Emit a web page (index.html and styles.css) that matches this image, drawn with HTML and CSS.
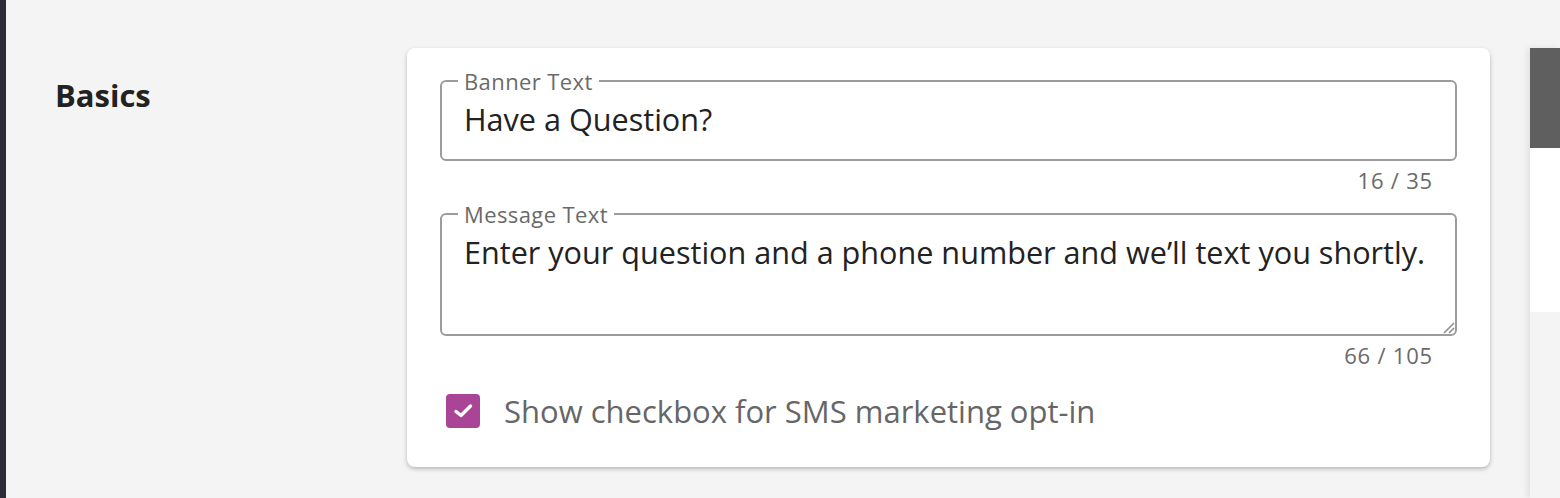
FILE: index.html
```html
<!DOCTYPE html>
<html lang="en">
<head>
    <meta charset="UTF-8">
    <meta name="viewport" content="width=device-width, initial-scale=1.0">
    <title>Basics</title>
    <link rel="stylesheet" href="styles.css">
</head>
<body>
    <div class="app">
        <div class="sidebar"></div>

        <main class="content">
            <section class="settings-row">
                <h2 class="settings-title">Basics</h2>

                <div class="card">
                    <fieldset class="field">
                        <legend>Banner Text</legend>
                        <input class="field-input" type="text" value="Have a Question?">
                    </fieldset>
                    <div class="counter">16 / 35</div>

                    <fieldset class="field field-multiline">
                        <legend>Message Text</legend>
                        <textarea class="field-input field-textarea">Enter your question and a phone number and we’ll text you shortly.</textarea>
                        <svg class="resize-grip" width="14" height="14" viewBox="0 0 14 14">
                            <path d="M3 13 L13 3 M8 13 L13 8" stroke="#8a8a8a" stroke-width="1.5" fill="none"/>
                        </svg>
                    </fieldset>
                    <div class="counter">66 / 105</div>

                    <label class="check-row">
                        <span class="check-box">
                            <svg width="34" height="34" viewBox="0 0 34 34">
                                <path d="M10 17.5 L15 21.5 L24.5 12" stroke="#fff" stroke-width="3.4" fill="none" stroke-linecap="round" stroke-linejoin="round"/>
                            </svg>
                        </span>
                        <span class="check-label">Show checkbox for SMS marketing opt-in</span>
                    </label>
                </div>
            </section>

            <aside class="preview">
                <div class="preview-header"></div>
                <div class="preview-body"></div>
            </aside>
        </main>
    </div>
</body>
</html>
```

FILE: styles.css
```css
body {
    margin: 0;
    padding: 0;
    font-family: "Open Sans", "Noto Sans", sans-serif;
    overflow: hidden;
}

.app {
    display: flex;
    height: 498px;
    background-color: #f4f4f4;
}

.sidebar {
    width: 6px;
    flex-shrink: 0;
    background-color: #2c2b36;
}

.content {
    flex: 1;
    display: flex;
    padding-top: 48px;
    min-width: 0;
}

.settings-row {
    display: flex;
    padding-left: 49px;
}

.settings-title {
    width: 352px;
    margin: 0;
    padding-top: 29px;
    font-size: 31px;
    line-height: 36px;
    font-weight: 700;
    color: #222;
}

.card {
    width: 1083px;
    height: 419px;
    box-sizing: border-box;
    padding: 20px 33px 0;
    background-color: #fff;
    border-radius: 8px;
    box-shadow: 0 2px 4px rgba(0, 0, 0, 0.25);
}

.field {
    position: relative;
    margin: 0;
    padding: 5px 0 20px 22px;
    border: 2px solid #9c9c9c;
    border-radius: 6px;
}

.field legend {
    margin-left: -6px;
    padding: 0 6px;
    font-size: 22px;
    line-height: 26px;
    letter-spacing: 0.4px;
    color: #6a6a6a;
}

.field-input {
    display: block;
    width: 100%;
    box-sizing: border-box;
    margin: 0;
    padding: 0 22px 0 0;
    border: none;
    outline: none;
    background: transparent;
    font-family: inherit;
    font-size: 30.6px;
    line-height: 40px;
    height: 40px;
    color: #222;
}

.field-multiline {
    padding-bottom: 0;
}

.field-textarea {
    height: 102px;
    resize: none;
    overflow: hidden;
}

.resize-grip {
    position: absolute;
    right: 0;
    bottom: 0;
}

.counter {
    margin: 6px 24px 8px 0;
    text-align: right;
    font-size: 22px;
    line-height: 26px;
    letter-spacing: 0.8px;
    color: #6a6a6a;
}

.field-multiline + .counter {
    margin-top: 6px;
    margin-bottom: 26px;
}

.check-row {
    display: flex;
    align-items: center;
    gap: 24px;
    padding-left: 6px;
}

.check-box {
    display: flex;
    width: 34px;
    height: 34px;
    border-radius: 4px;
    background-color: #a94497;
}

.check-label {
    font-size: 31px;
    line-height: 34px;
    color: #666;
}

.preview {
    margin-left: 40px;
    flex: 1;
    display: flex;
    flex-direction: column;
    box-shadow: -3px 0 6px rgba(0, 0, 0, 0.08);
}

.preview-header {
    height: 100px;
    background-color: #5f5f5f;
}

.preview-body {
    height: 164px;
    background-color: #fff;
}
```
